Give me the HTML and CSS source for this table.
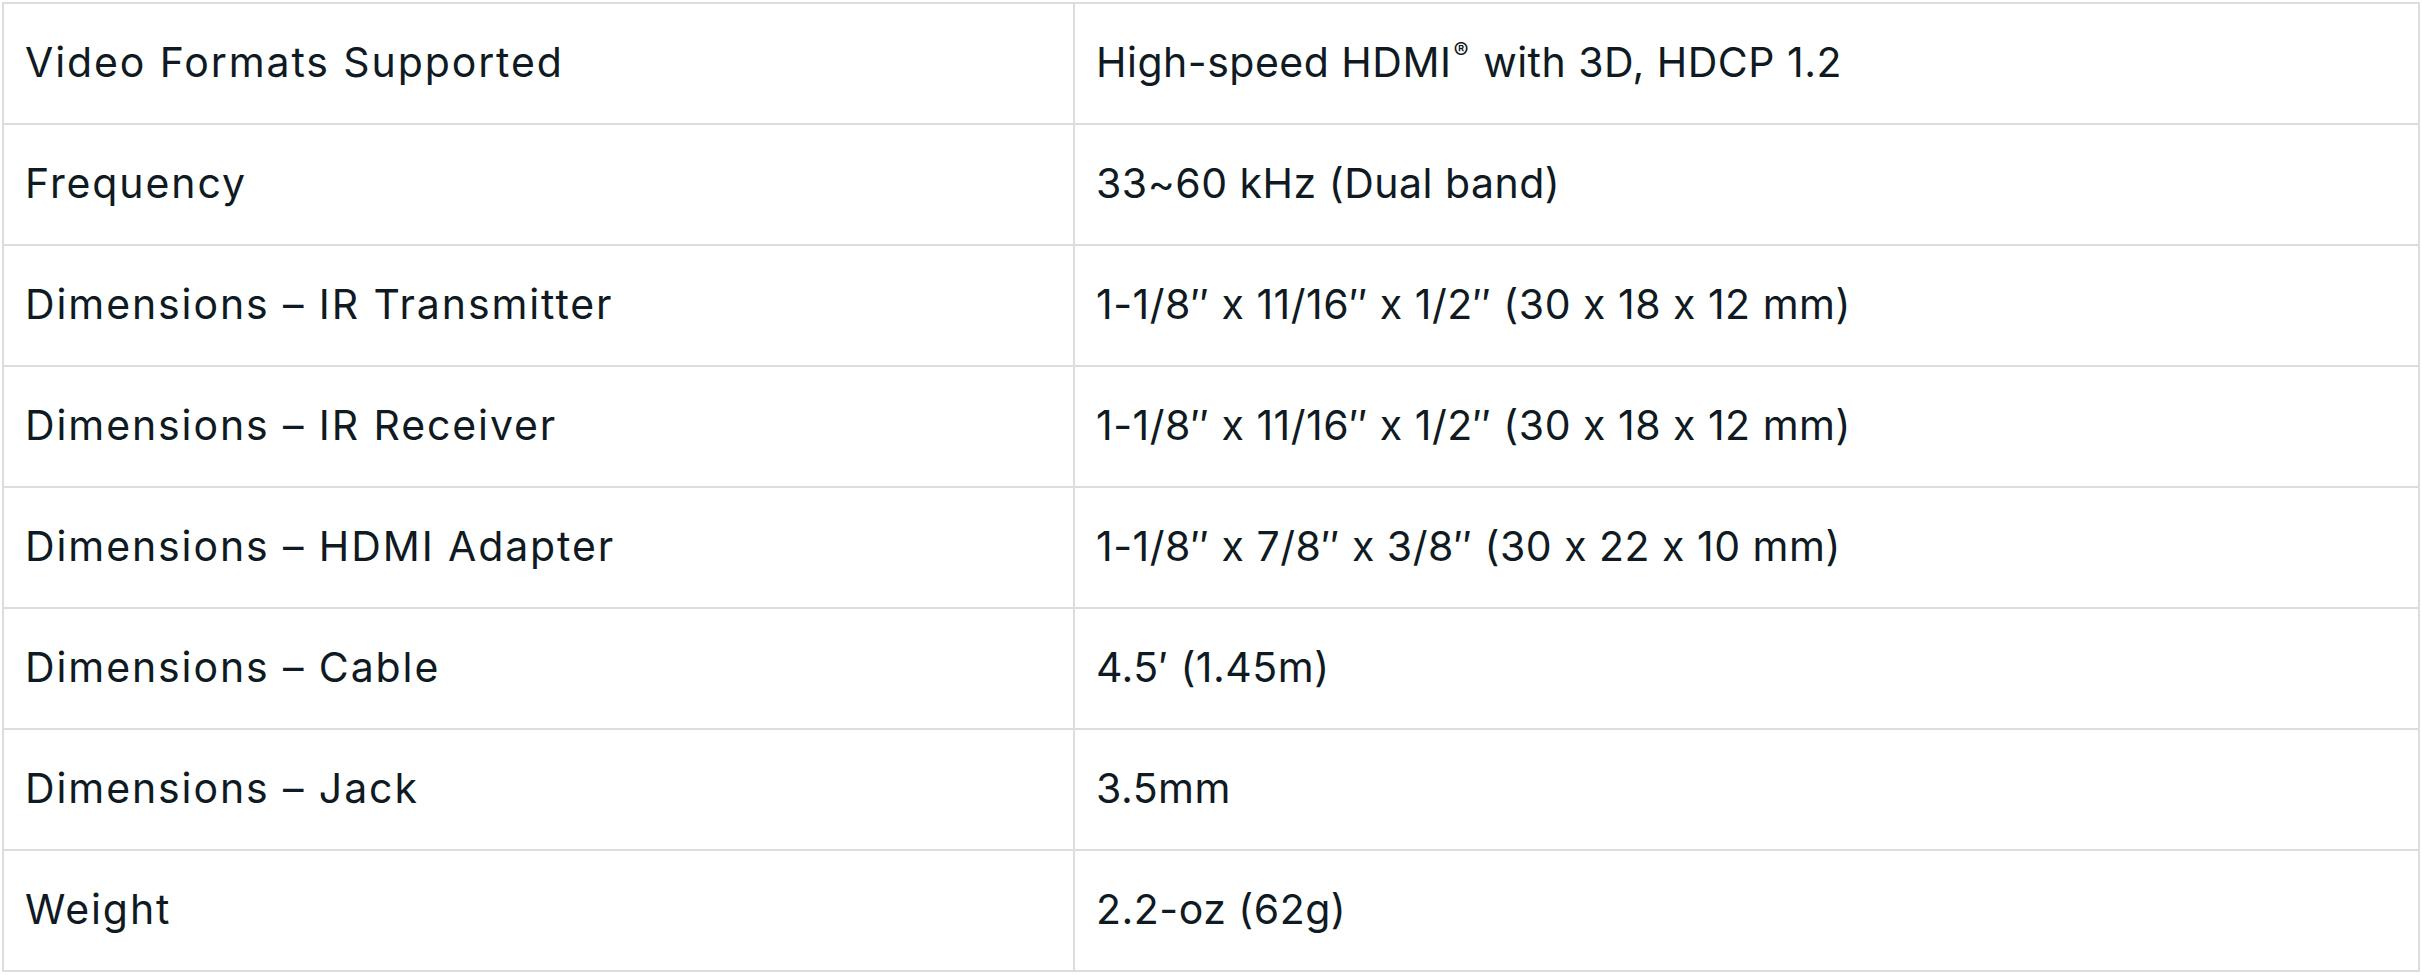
FILE: index.html
```html
<!DOCTYPE html>
<html lang="en">
<head>
<meta charset="utf-8">
<title>Specifications</title>
<link rel="stylesheet" href="styles.css">
</head>
<body>
<div class="spec-table">
  <div class="cell label">Video Formats Supported</div>
  <div class="cell">High-speed HDMI<span class="reg">®</span> with 3D, HDCP 1.2</div>
  <div class="cell label">Frequency</div>
  <div class="cell">33~60 kHz (Dual band)</div>
  <div class="cell label">Dimensions – IR Transmitter</div>
  <div class="cell">1-1/8″ x 11/16″ x 1/2″ (30 x 18 x 12 mm)</div>
  <div class="cell label">Dimensions – IR Receiver</div>
  <div class="cell">1-1/8″ x 11/16″ x 1/2″ (30 x 18 x 12 mm)</div>
  <div class="cell label">Dimensions – HDMI Adapter</div>
  <div class="cell">1-1/8″ x 7/8″ x 3/8″ (30 x 22 x 10 mm)</div>
  <div class="cell label">Dimensions – Cable</div>
  <div class="cell">4.5′ (1.45m)</div>
  <div class="cell label">Dimensions – Jack</div>
  <div class="cell">3.5mm</div>
  <div class="cell label">Weight</div>
  <div class="cell">2.2-oz (62g)</div>
</div>
</body>
</html>
```

FILE: styles.css
```css
html, body {
  margin: 0;
  padding: 0;
  background: #ffffff;
}

body {
  padding: 2px 0 0 2px;
  font-family: Inter, "Noto Sans", sans-serif;
  color: #0f1a22;
}

.spec-table {
  display: grid;
  grid-template-columns: 1071px 1345px;
  width: 2418px;
  box-sizing: border-box;
  border-top: 2px solid #dddddd;
  border-left: 2px solid #dddddd;
}

.cell {
  box-sizing: border-box;
  height: 121px;
  display: flex;
  align-items: center;
  padding: 0 20px 2px 21px;
  border-right: 2px solid #dddddd;
  border-bottom: 2px solid #dddddd;
  font-size: 41px;
  letter-spacing: 0.5px;
  line-height: 1;
  white-space: pre;
  font-feature-settings: "calt" 0;
}

.label {
  letter-spacing: 1.9px;
}

.reg {
  font-size: 0.55em;
  position: relative;
  top: -0.5em;
  margin: 0 2px 0 2px;
}
```
